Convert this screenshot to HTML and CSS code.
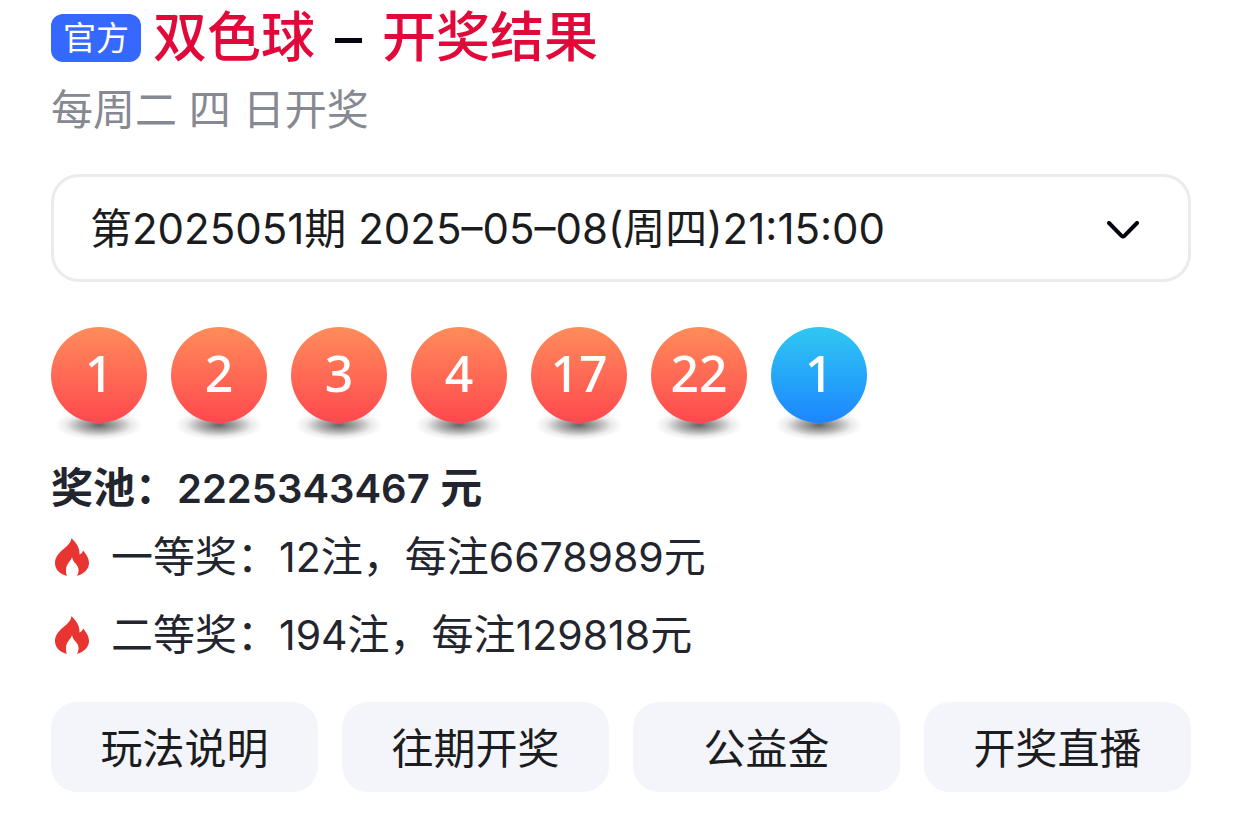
FILE: index.html
```html
<!DOCTYPE html>
<html lang="zh-CN">
<head>
  <meta charset="UTF-8" />
  <meta name="viewport" content="width=device-width, initial-scale=1.0" />
  <title>双色球 – 开奖结果</title>
  <link rel="stylesheet" href="styles.css">
</head>
<body>
  <main class="result">
    <header class="heading">
      <span class="badge">官方</span>
      <h1 class="title"><em>双色球</em> – <em>开奖结果</em></h1>
    </header>
    <p class="schedule">每周二 四 日开奖</p>

    <div class="period">
      <select class="period-select" aria-label="期号">
        <option>第2025051期 2025–05–08(周四)21:15:00</option>
      </select>
      <svg class="period-arrow" viewBox="0 0 32 18" aria-hidden="true">
        <path d="M2 2 L14.6 14.8 Q16 16.2 17.4 14.8 L30 2" />
      </svg>
    </div>

    <div class="balls">
      <span class="ball">1</span>
      <span class="ball">2</span>
      <span class="ball">3</span>
      <span class="ball">4</span>
      <span class="ball">17</span>
      <span class="ball">22</span>
      <span class="ball blue">1</span>
    </div>

    <p class="pool">奖池：<span class="num">2225343467</span> 元</p>

    <ul class="prizes">
      <li class="prize">
        <svg class="fire" viewBox="0 0 36 40" aria-hidden="true">
          <path d="M17.5 1 C20 4 26 9 25.5 17.5 C27.5 16.5 28.5 15.5 29 13.5 C32 17 35 21 35 26 C35 32 30 37 23 39 C25.5 34 25 31 22 27 C20 25 18.5 23 18 20 C17 24 12 27 12 33 C12 35 12 37 13 39 C5 37 1 32 1 26 C1 20 5 16 9 12.5 C13 9 17 6 17.5 1 Z" />
        </svg>
        <span>一等奖：<span class="num">12</span>注，每注<span class="num">6678989</span>元</span>
      </li>
      <li class="prize">
        <svg class="fire" viewBox="0 0 36 40" aria-hidden="true">
          <path d="M17.5 1 C20 4 26 9 25.5 17.5 C27.5 16.5 28.5 15.5 29 13.5 C32 17 35 21 35 26 C35 32 30 37 23 39 C25.5 34 25 31 22 27 C20 25 18.5 23 18 20 C17 24 12 27 12 33 C12 35 12 37 13 39 C5 37 1 32 1 26 C1 20 5 16 9 12.5 C13 9 17 6 17.5 1 Z" />
        </svg>
        <span>二等奖：<span class="num">194</span>注，每注<span class="num">129818</span>元</span>
      </li>
    </ul>

    <div class="actions">
      <button class="action" type="button">玩法说明</button>
      <button class="action" type="button">往期开奖</button>
      <button class="action" type="button">公益金</button>
      <button class="action" type="button">开奖直播</button>
    </div>
  </main>
</body>
</html>
```

FILE: styles.css
```css
* {
  box-sizing: border-box;
}
body {
  margin: 0;
  background: #fff;
  color: #23252e;
  font-family: Inter, "Noto Sans CJK SC", sans-serif;
  font-size: 42px;
  line-height: 60px;
}
h1, p, ul {
  margin: 0;
  padding: 0;
}
.result {
  padding: 8px 51px 32px;
}
.heading {
  display: flex;
  align-items: center;
  gap: 12px;
}
.badge {
  padding: 0 12px;
  border-radius: 12px;
  background: #3468ff;
  color: #fff;
  font-size: 33px;
  line-height: 48px;
}
.title {
  display: flex;
  gap: 20px;
  color: #050510;
  font-size: 54px;
  font-weight: 500;
}
.title em {
  color: #e0093a;
  font-style: normal;
}
.schedule {
  margin-top: 12px;
  color: #868892;
}
.period {
  display: grid;
  align-items: center;
  margin-top: 34px;
}
.period-select {
  grid-area: 1 / 1;
  width: 100%;
  height: 108px;
  padding: 2px 36px 0;
  border: 3px solid #ebebec;
  border-radius: 28px;
  background: #fff;
  color: #1b1c20;
  font: inherit;
  appearance: none;
}
.period-arrow {
  grid-area: 1 / 1;
  justify-self: end;
  width: 32px;
  height: 18px;
  margin: 3px 52px 0 0;
  fill: none;
  stroke: #050510;
  stroke-width: 4;
  stroke-linecap: round;
  pointer-events: none;
}
.balls {
  display: flex;
  gap: 24px;
  margin-top: 45px;
}
.ball {
  position: relative;
  width: 96px;
  height: 96px;
  border-radius: 50%;
  background: linear-gradient(#ff8c5a, #ff484e);
  color: #fff;
  font-family: "Noto Sans", sans-serif;
  font-size: 50px;
  font-weight: 500;
  line-height: 92px;
  text-align: center;
}
.ball.blue {
  background: linear-gradient(#30c8f2, #1b86ff);
}
/* soft shadow on the ground below the ball */
.ball::after {
  content: "";
  position: absolute;
  z-index: -1;
  left: 4px;
  right: 4px;
  bottom: -17px;
  height: 30px;
  background: radial-gradient(closest-side, rgba(0, 0, 0, 0.6), rgba(0, 0, 0, 0.3) 45%, rgba(0, 0, 0, 0.08) 75%, transparent);
}
.pool {
  margin-top: 35px;
  font-weight: 600;
}
.num {
  font-size: 41px;
  line-height: 1;
}
.pool .num {
  font-size: 40px;
}
.prizes {
  display: grid;
  gap: 18px;
  margin-top: 9px;
  list-style: none;
}
.prize {
  display: flex;
  align-items: center;
  gap: 21px;
  padding-left: 3px;
}
.fire {
  width: 36px;
  height: 40px;
  fill: #e93532;
}
.actions {
  display: grid;
  grid-template-columns: repeat(4, 1fr);
  gap: 24px;
  margin-top: 37px;
}
.action {
  height: 90px;
  padding: 3px 0 0;
  border: 0;
  border-radius: 26px;
  background: #f4f5fa;
  color: #1b1c20;
  font: inherit;
  cursor: pointer;
}
```
